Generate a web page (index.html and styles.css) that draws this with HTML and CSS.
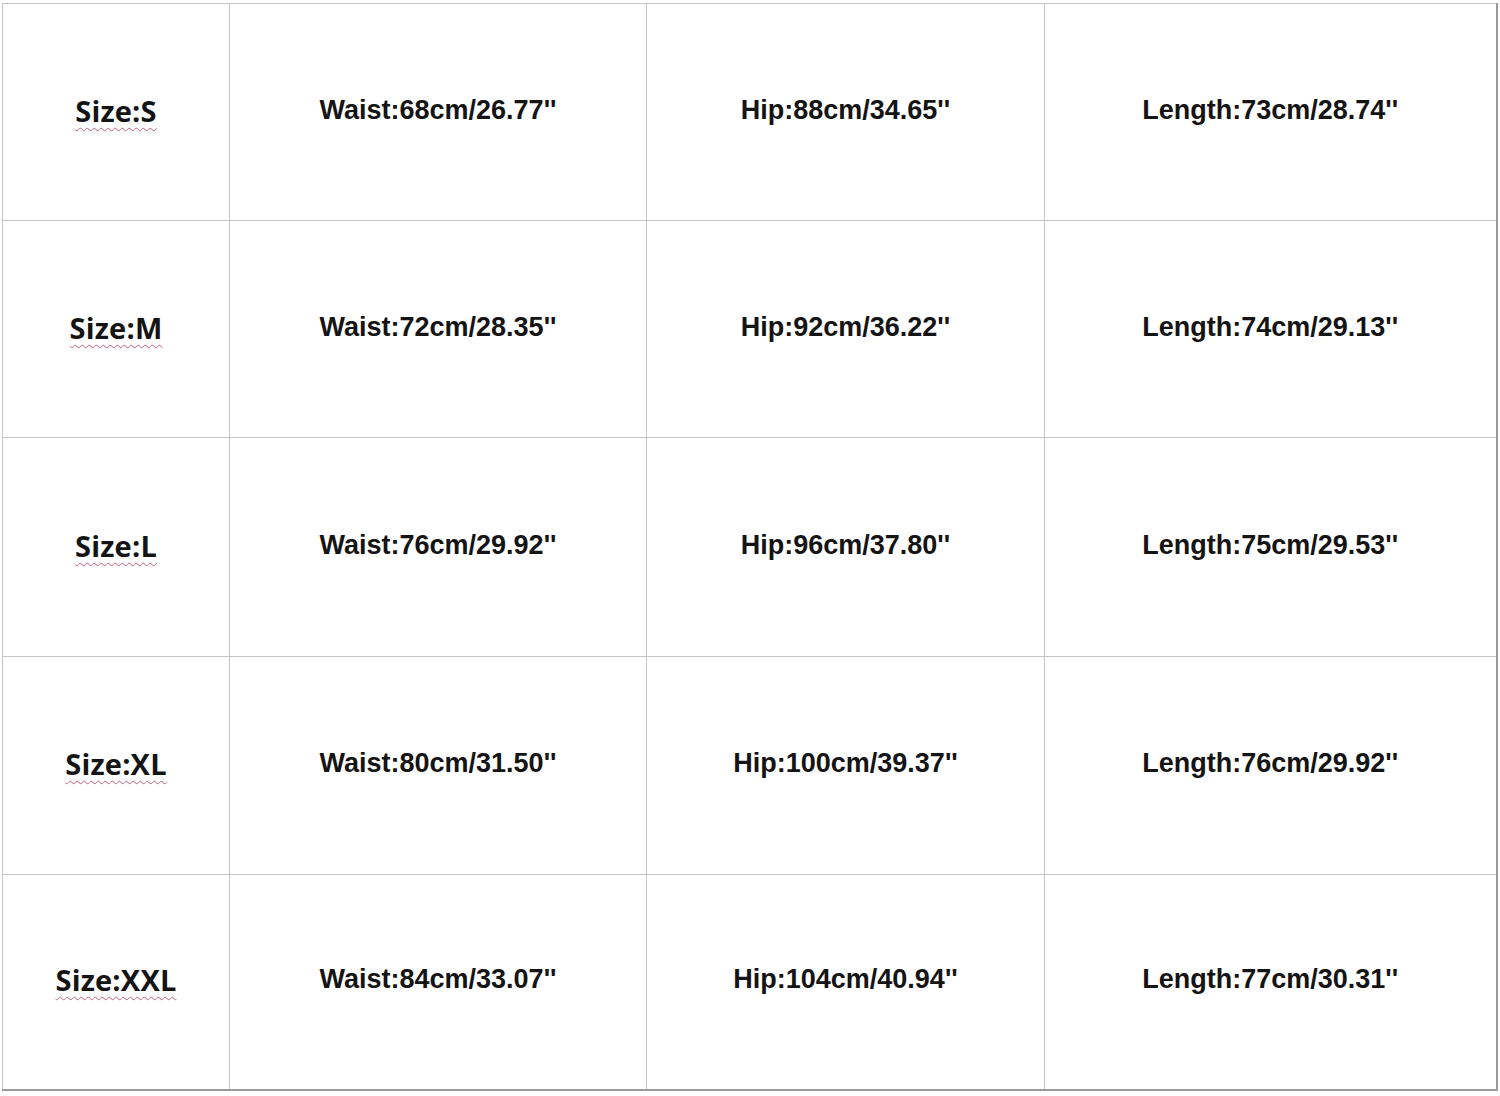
FILE: index.html
```html
<!DOCTYPE html>
<html>
<head>
<meta charset="utf-8">
<link rel="stylesheet" href="styles.css">
</head>
<body>
<table class="chart">
  <colgroup>
    <col class="c-size">
    <col class="c-waist">
    <col class="c-hip">
    <col class="c-len">
  </colgroup>
  <tr class="r1">
    <td class="size"><span class="sq">Size:S</span></td>
    <td>Waist:68cm/26.77''</td>
    <td>Hip:88cm/34.65''</td>
    <td>Length:73cm/28.74''</td>
  </tr>
  <tr class="r2">
    <td class="size"><span class="sq">Size:M</span></td>
    <td>Waist:72cm/28.35''</td>
    <td>Hip:92cm/36.22''</td>
    <td>Length:74cm/29.13''</td>
  </tr>
  <tr class="r3">
    <td class="size"><span class="sq">Size:L</span></td>
    <td>Waist:76cm/29.92''</td>
    <td>Hip:96cm/37.80''</td>
    <td>Length:75cm/29.53''</td>
  </tr>
  <tr class="r4">
    <td class="size"><span class="sq">Size:XL</span></td>
    <td>Waist:80cm/31.50''</td>
    <td>Hip:100cm/39.37''</td>
    <td>Length:76cm/29.92''</td>
  </tr>
  <tr class="r5">
    <td class="size"><span class="sq">Size:XXL</span></td>
    <td>Waist:84cm/33.07''</td>
    <td>Hip:104cm/40.94''</td>
    <td>Length:77cm/30.31''</td>
  </tr>
</table>
</body>
</html>
```
FILE: styles.css
```css
html, body {
  margin: 0;
  padding: 0;
  background: #ffffff;
}

.chart {
  margin: 3px 0 0 2px;
  width: 1494px;
  border-collapse: collapse;
  table-layout: fixed;
  border-top: 1px solid #cfcfcf;
  border-left: 1px solid #cfcfcf;
  border-right: 2px solid #9a9a9a;
  border-bottom: 2px solid #9a9a9a;
}

.c-size { width: 227px; }
.c-waist { width: 417px; }
.c-hip { width: 398px; }
.c-len { width: 452px; }

.chart td {
  border: 1px solid #c6c6c6;
  padding: 0 0 4px 0;
  text-align: center;
  vertical-align: middle;
  font-family: "Liberation Sans", Arial, sans-serif;
  font-weight: bold;
  font-size: 27px;
  color: #141414;
  box-sizing: border-box;
}

.r1 { height: 217px; }
.r2 { height: 217px; }
.r3 { height: 219px; }
.r4 { height: 218px; }
.r5 { height: 215px; }

.chart td.size {
  font-family: "Open Sans", "Noto Sans", sans-serif;
  font-size: 29px;
  font-weight: 700;
  letter-spacing: 0.2px;
}

.sq {
  text-decoration-line: underline;
  text-decoration-style: wavy;
  text-decoration-color: #c8607a;
  text-decoration-thickness: 1px;
  text-underline-offset: 5px;
}
```
